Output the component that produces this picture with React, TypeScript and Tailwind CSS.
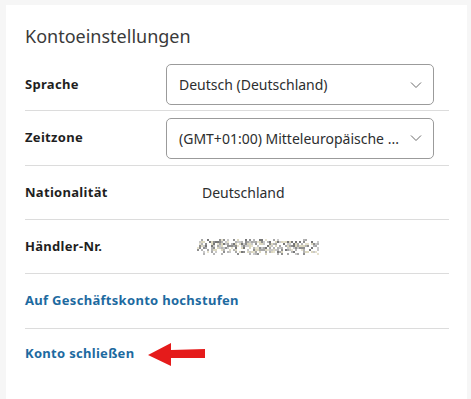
import React from 'react';

const ChevronDown: React.FC = () => (
  <svg width="12" height="8" viewBox="0 0 12 8" fill="none" className="shrink-0">
    <path d="M1 1.5 6 6.5 11 1.5" stroke="#6b6b6b" strokeWidth="1" />
  </svg>
);

const SelectBox: React.FC<{ value: string }> = ({ value }) => (
  <div className="flex h-[41px] w-[268px] items-center justify-between rounded-[5px] border border-[#9b9b9b] pl-[12px] pr-[11px]">
    <span className="whitespace-nowrap text-[14px] text-[#2c2e2f]">{value}</span>
    <ChevronDown />
  </div>
);

// pixelated blur over the merchant id
const Scrambled: React.FC = () => {
  let seed = 7;
  const rnd = () => {
    seed = (seed * 9301 + 49297) % 233280;
    return seed / 233280;
  };
  const tones = ['#c9c9c9', '#a8a8a8', '#dcd8c0', '#8f8f8f', '#e6e2cf', '#b5b5b5', '#777777'];
  const cells: React.ReactNode[] = [];
  for (let y = 0; y < 16; y += 2) {
    for (let x = 0; x < 122; x += 2) {
      const band = y > 1 && y < 14 ? 0.62 : 0.25;
      if (rnd() < band) {
        const c = tones[Math.floor(rnd() * tones.length)];
        cells.push(<rect key={`${x}-${y}`} x={x} y={y} width="2" height="2" fill={c} />);
      }
    }
  }
  return (
    <svg width="122" height="16" viewBox="0 0 122 16">
      {cells}
    </svg>
  );
};

const RedArrow: React.FC = () => (
  <svg width="58" height="24" viewBox="0 0 58 24">
    <polygon points="0,13 23,1 23,8 57,7 57,16 23,16 23,24" fill="#e51b1b" />
  </svg>
);

const Row: React.FC<{ children: React.ReactNode; className?: string }> = ({ children, className }) => (
  <div className={`flex items-center border-b border-[#dcdcdc] ${className ?? ''}`}>{children}</div>
);

const Label: React.FC<{ children: React.ReactNode }> = ({ children }) => (
  <div className="w-[141px] shrink-0 text-[13px] font-bold tracking-[0.3px] text-[#1f1f1f]">{children}</div>
);

export default function App() {
  return (
    <div className="min-h-[399px] bg-[#f6f6f6] pl-[6px] pr-[4px] pt-[5px]" style={{ fontFamily: '"Noto Sans", "Open Sans", sans-serif' }}>
      <div className="min-h-[394px] bg-white pl-[19px] pr-[18px]">
        <h2 className="pt-[18px] text-[18px] font-normal leading-[26px] text-[#3a3a3a]">Kontoeinstellungen</h2>

        <div className="mt-[8px]">
          <Row className="pb-[5px] pt-[7px]">
            <Label>Sprache</Label>
            <SelectBox value="Deutsch (Deutschland)" />
          </Row>
          <Row className="h-[55px]">
            <Label>Zeitzone</Label>
            <SelectBox value="(GMT+01:00) Mitteleuropäische ..." />
          </Row>
          <Row className="h-[54px]">
            <Label>Nationalität</Label>
            <span className="pl-[36px] text-[14px] text-[#2c2e2f]">Deutschland</span>
          </Row>
          <Row className="h-[54px]">
            <Label>Händler-Nr.</Label>
            <div className="pl-[31px]">
              <Scrambled />
            </div>
          </Row>
          <Row className="h-[55px]">
            <a className="text-[13px] font-bold tracking-[0.3px] text-[#1d6aa0]">Auf Geschäftskonto hochstufen</a>
          </Row>
          <div className="flex h-[50px] items-center gap-[14px]">
            <a className="text-[13px] font-bold tracking-[0.3px] text-[#1d6aa0]">Konto schließen</a>
            <RedArrow />
          </div>
        </div>
      </div>
    </div>
  );
}
